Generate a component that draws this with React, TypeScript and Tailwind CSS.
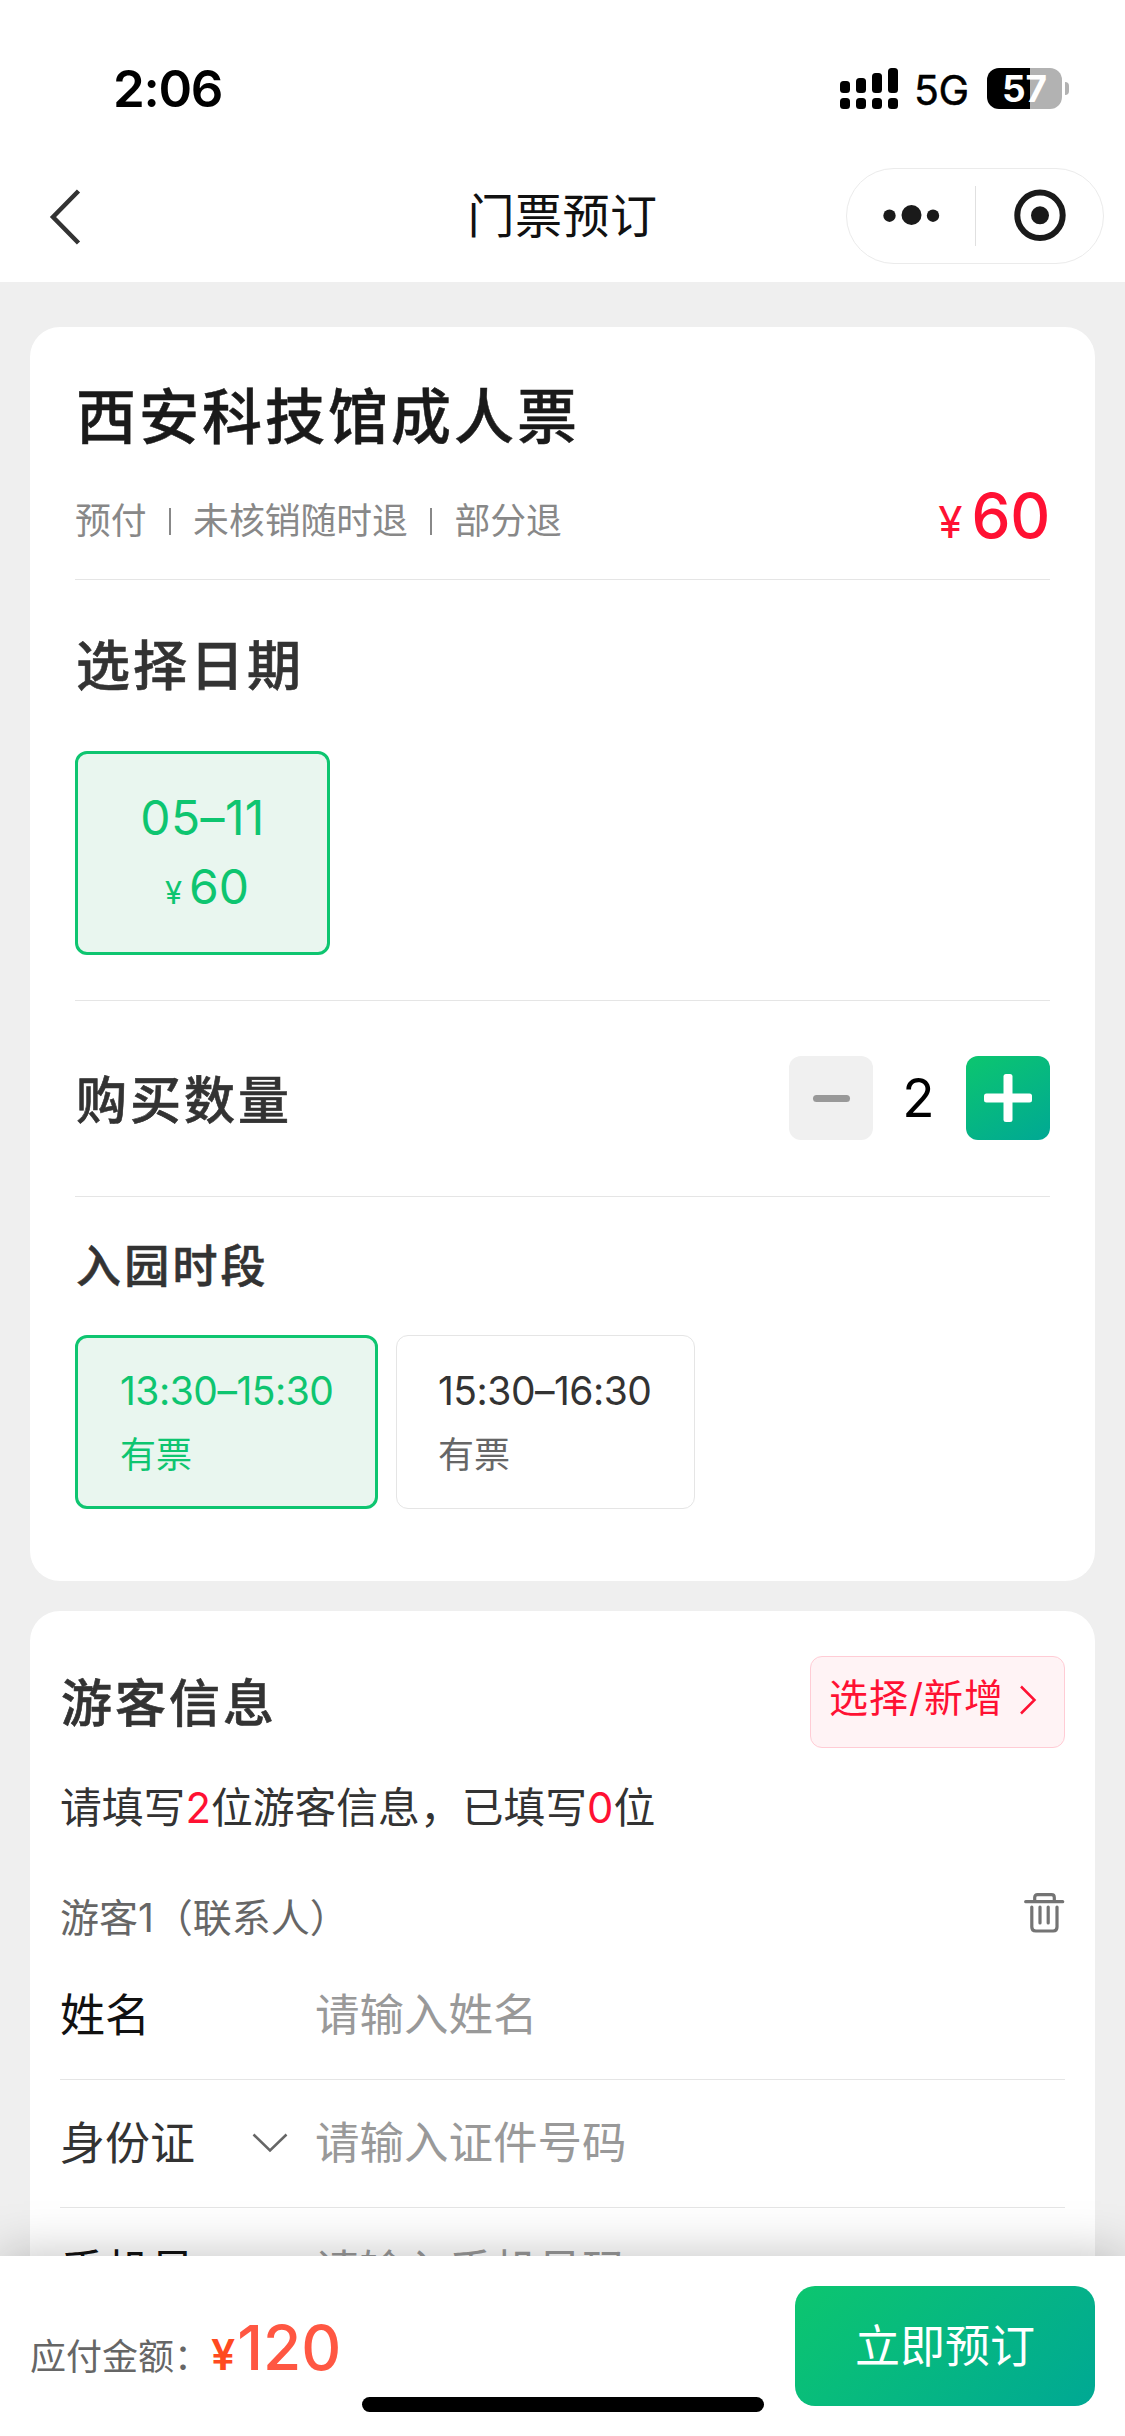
import React, { useState } from "react";

const slots = [
  { time: "13:30–15:30", status: "有票" },
  { time: "15:30–16:30", status: "有票" },
];

const fields = [
  { label: "姓名", placeholder: "请输入姓名", select: false },
  { label: "身份证", placeholder: "请输入证件号码", select: true },
  { label: "手机号", placeholder: "请输入手机号码", select: false },
];

const StatusBar: React.FC = () => (
  <div className="flex h-[150px] items-center justify-between pt-[27px] pl-[113px] pr-[56px] text-black">
    <span className="text-[51px] leading-none font-semibold tracking-[-1.3px]">2:06</span>
    <div className="flex items-center">
      <svg width="58" height="41" viewBox="0 0 58 41">
        <rect x="0" y="13" width="10" height="12" rx="3.5" />
        <rect x="16" y="10" width="10" height="15" rx="3.5" />
        <rect x="32" y="5" width="10" height="20" rx="3.5" />
        <rect x="48" y="0" width="10" height="25" rx="3.5" />
        <rect x="0" y="30" width="10" height="11" rx="3.5" />
        <rect x="16" y="30" width="10" height="11" rx="3.5" />
        <rect x="32" y="30" width="10" height="11" rx="3.5" />
        <rect x="48" y="30" width="10" height="11" rx="3.5" />
      </svg>
      <span className="ml-[16px] w-[56px] text-[41px] leading-none tracking-[-0.5px] mt-[3px] [-webkit-text-stroke:0.5px]">5G</span>
      <div className="ml-[17px] flex h-[41px] w-[75px] items-center justify-center rounded-[12px] bg-[linear-gradient(90deg,#000_0_43px,#b2b2b2_43px)] text-[37px] leading-none font-bold text-white">
        57
      </div>
      <div className="ml-[3px] h-[13px] w-[4px] rounded-r-full bg-[#b2b2b2]" />
    </div>
  </div>
);

const NavBar: React.FC = () => (
  <div className="grid h-[132px] grid-cols-[1fr_auto_1fr] items-center px-[21px]">
    <svg className="mt-[1px] ml-[28px]" width="33" height="56" viewBox="0 0 33 56" fill="none" stroke="#333" strokeWidth="4.5">
      <path d="M29.5 2 L4 28 L29.5 54" />
    </svg>
    <h1 className="-mt-[2px] text-[47px] leading-none tracking-[0.5px] text-[#111]">门票预订</h1>
    <div className="flex h-[96px] w-[258px] items-center justify-self-end rounded-full border border-[#ebebeb]">
      <svg width="256" height="94" viewBox="0 0 256 94" fill="#1a1a1a">
        <circle cx="42.5" cy="46.7" r="6.2" />
        <circle cx="64.5" cy="46" r="10" />
        <circle cx="86" cy="46.7" r="6.2" />
        <rect x="128" y="17" width="1" height="60" fill="#e0e0e0" />
        <circle cx="193" cy="46.3" r="22.7" fill="none" stroke="#1a1a1a" strokeWidth="6" />
        <circle cx="193" cy="46.3" r="9" />
      </svg>
    </div>
  </div>
);

const TrashIcon: React.FC = () => (
  <svg width="41" height="41" viewBox="0 0 41 41" fill="none" stroke="#747474" strokeWidth="3.2" strokeLinecap="round">
    <path d="M1.7 9.7 H38.7" />
    <path d="M10.7 9 V5.5 Q10.7 2.7 13.5 2.7 H27.5 Q30.3 2.7 30.3 5.5 V9" />
    <path d="M7.8 15 V35 Q7.8 39 11.8 39 H29.2 Q33 39 33 35 V15" />
    <path d="M16 15 V31 M24.2 15 V31" />
  </svg>
);

const App: React.FC = () => {
  const [count, setCount] = useState(2);
  const [slot, setSlot] = useState(0);
  const price = 60;

  return (
    <div className="flex h-[2436px] w-[1125px] flex-col overflow-hidden bg-[#efefef] font-['Inter','Noto_Sans_CJK_SC',sans-serif]">
      <header className="shrink-0 bg-white">
        <StatusBar />
        <NavBar />
      </header>

      <main className="flex min-h-0 flex-1 flex-col gap-[30px] overflow-hidden px-[30px] pt-[45px]">
        <section className="shrink-0 rounded-[30px] bg-white px-[45px] pb-[72px]">
          <div className="border-b border-[#e5e5e5] pt-[60px] pb-[33px]">
            <h2 className="pl-[1px] text-[60px] leading-none font-medium tracking-[3px] text-[#1a1a1a] [-webkit-text-stroke:0.5px]">西安科技馆成人票</h2>
            <div className="mt-[39px] flex h-[60px] items-center justify-between">
              <div className="mt-[12px] flex items-center text-[35.8px] leading-none text-[#888]">
                <span>预付</span>
                <span className="mx-[22px] h-[27px] w-[2.5px] bg-[#888]" />
                <span>未核销随时退</span>
                <span className="mx-[22px] h-[27px] w-[2.5px] bg-[#888]" />
                <span>部分退</span>
              </div>
              <div className="flex items-baseline leading-none text-[#ff1133]">
                <span className="mr-[9px] text-[44px]">¥</span>
                <span className="text-[62px] font-medium tracking-[-0.3px]">{price}</span>
              </div>
            </div>
          </div>

          <div className="border-b border-[#e5e5e5] pt-[60px] pb-[45px]">
            <h3 className="pl-[1px] text-[54px] leading-none font-medium tracking-[3px] text-[#333] [-webkit-text-stroke:0.6px]">选择日期</h3>
            <button className="mt-[57px] flex h-[204px] w-[255px] flex-col items-center rounded-[12px] border-[3px] border-[#0ec570] bg-[#e9f6ef] pt-[40px] text-[48px] leading-none text-[#0ec570]">
              <span className="tracking-[0.4px]">05–11</span>
              <span className="mt-[21px] ml-[9px] flex items-baseline">
                <span className="mr-[7px] text-[31px]">¥</span>
                {price}
              </span>
            </button>
          </div>

          <div className="flex items-center justify-between border-b border-[#e5e5e5] pt-[55px] pb-[56px]">
            <h3 className="mt-[4px] pl-[1px] text-[51px] leading-none font-medium tracking-[3px] text-[#333] [-webkit-text-stroke:0.6px]">购买数量</h3>
            <div className="flex items-center">
              <button
                onClick={() => setCount(Math.max(1, count - 1))}
                className="flex h-[84px] w-[84px] items-center justify-center rounded-[12px] bg-[#f0f0f0]"
              >
                <span className="h-[7px] w-[37px] rounded-full bg-[#999]" />
              </button>
              <span className="w-[93px] pr-[2px] text-center text-[53px] leading-none text-black">{count}</span>
              <button
                onClick={() => setCount(count + 1)}
                className="flex h-[84px] w-[84px] items-center justify-center rounded-[12px] bg-[linear-gradient(150deg,#0cc66f,#00a894)]"
              >
                <svg width="48" height="48" viewBox="0 0 48 48" fill="#fff">
                  <rect x="0" y="19.5" width="48" height="9" rx="2.5" />
                  <rect x="19.5" y="0" width="9" height="48" rx="2.5" />
                </svg>
              </button>
            </div>
          </div>

          <h3 className="pt-[47px] pl-[1px] text-[45px] leading-none font-medium tracking-[3.2px] text-[#333] [-webkit-text-stroke:0.6px]">入园时段</h3>
          <div className="mt-[46px] flex gap-[18px]">
            {slots.map((s, i) => (
              <button
                key={s.time}
                onClick={() => setSlot(i)}
                className={
                  i === slot
                    ? "h-[174px] w-[303px] rounded-[12px] border-[3px] border-[#0ec570] bg-[#e9f6ef] pl-[42px] text-left text-[#0ec570]"
                    : "h-[174px] w-[299px] rounded-[12px] border border-[#e5e5e5] pl-[41px] text-left text-[#333]"
                }
              >
                <div className="-mt-[1px] text-[39px] leading-none tracking-[-0.5px]">{s.time}</div>
                <div className={i === slot ? "mt-[27px] text-[36px] leading-none" : "mt-[27px] text-[36px] leading-none text-[#666]"}>
                  {s.status}
                </div>
              </button>
            ))}
          </div>
        </section>

        <section className="shrink-0 rounded-[30px] bg-white px-[30px] pt-[45px]">
          <div className="flex h-[92px] items-center justify-between">
            <h3 className="mt-[2px] pl-[1px] text-[51px] leading-none font-medium tracking-[3px] text-[#333] [-webkit-text-stroke:0.6px]">游客信息</h3>
            <button className="flex h-[92px] w-[255px] items-center rounded-[12px] border border-[#ffccd5] bg-[#fff3f5] pb-[9px] pl-[18px] text-[39px] leading-none tracking-[1px] text-[#ff1133]">
              选择/新增
              <svg className="mt-[4px] ml-[15px]" width="18" height="30" viewBox="0 0 18 30" fill="none" stroke="#ff1133" strokeWidth="2.5">
                <path d="M2 1.5 L15.5 15 L2 28.5" />
              </svg>
            </button>
          </div>
          <p className="mt-[40px] text-[41.8px] leading-none whitespace-nowrap text-[#333]">
            请填写<span className="text-[#ff1133]">{count}</span>位游客信息，已填写<span className="text-[#ff1133]">0</span>位
          </p>
          <div className="mt-[68px] flex h-[39px] items-center justify-between">
            <span className="text-[39px] leading-none text-[#666]">游客1（联系人）</span>
            <span className="-mt-[10px]">
              <TrashIcon />
            </span>
          </div>
          <div className="mt-[15px]">
            {fields.map((f) => (
              <div key={f.label} className="flex h-[128px] items-center border-b border-[#e5e5e5] text-[45px] leading-none">
                <div className="flex w-[255px] items-center justify-between pr-[27px]">
                  <span className={f.select ? "text-[#333]" : "text-[#111]"}>{f.label}</span>
                  {f.select && (
                    <svg width="36" height="20" viewBox="0 0 36 20" fill="none" stroke="#666" strokeWidth="2.5">
                      <path d="M1.5 1.5 L18 17.5 L34.5 1.5" />
                    </svg>
                  )}
                </div>
                <span className="text-[44.5px] text-[#999]">{f.placeholder}</span>
              </div>
            ))}
          </div>
        </section>
      </main>

      <footer className="relative z-10 flex h-[180px] shrink-0 justify-between bg-white px-[30px] pt-[30px] shadow-[0_0_48px_rgba(0,0,0,0.25)]">
        <div className="flex items-baseline pt-[31px] leading-none">
          <span className="text-[36px] text-[#666]">应付金额：</span>
          <span className="mr-[2px] ml-[1px] text-[43px] font-semibold text-[#ff4a20]">¥</span>
          <span className="text-[62px] font-medium text-[#ff5742]">{count * price}</span>
        </div>
        <button className="h-[120px] w-[300px] rounded-[20px] bg-[linear-gradient(135deg,#0cc66f,#00a894)] text-[45px] leading-none text-white">
          立即预订
        </button>
        <div className="absolute bottom-[24px] left-[362px] h-[15px] w-[402px] rounded-full bg-black" />
      </footer>
    </div>
  );
};

export default App;
